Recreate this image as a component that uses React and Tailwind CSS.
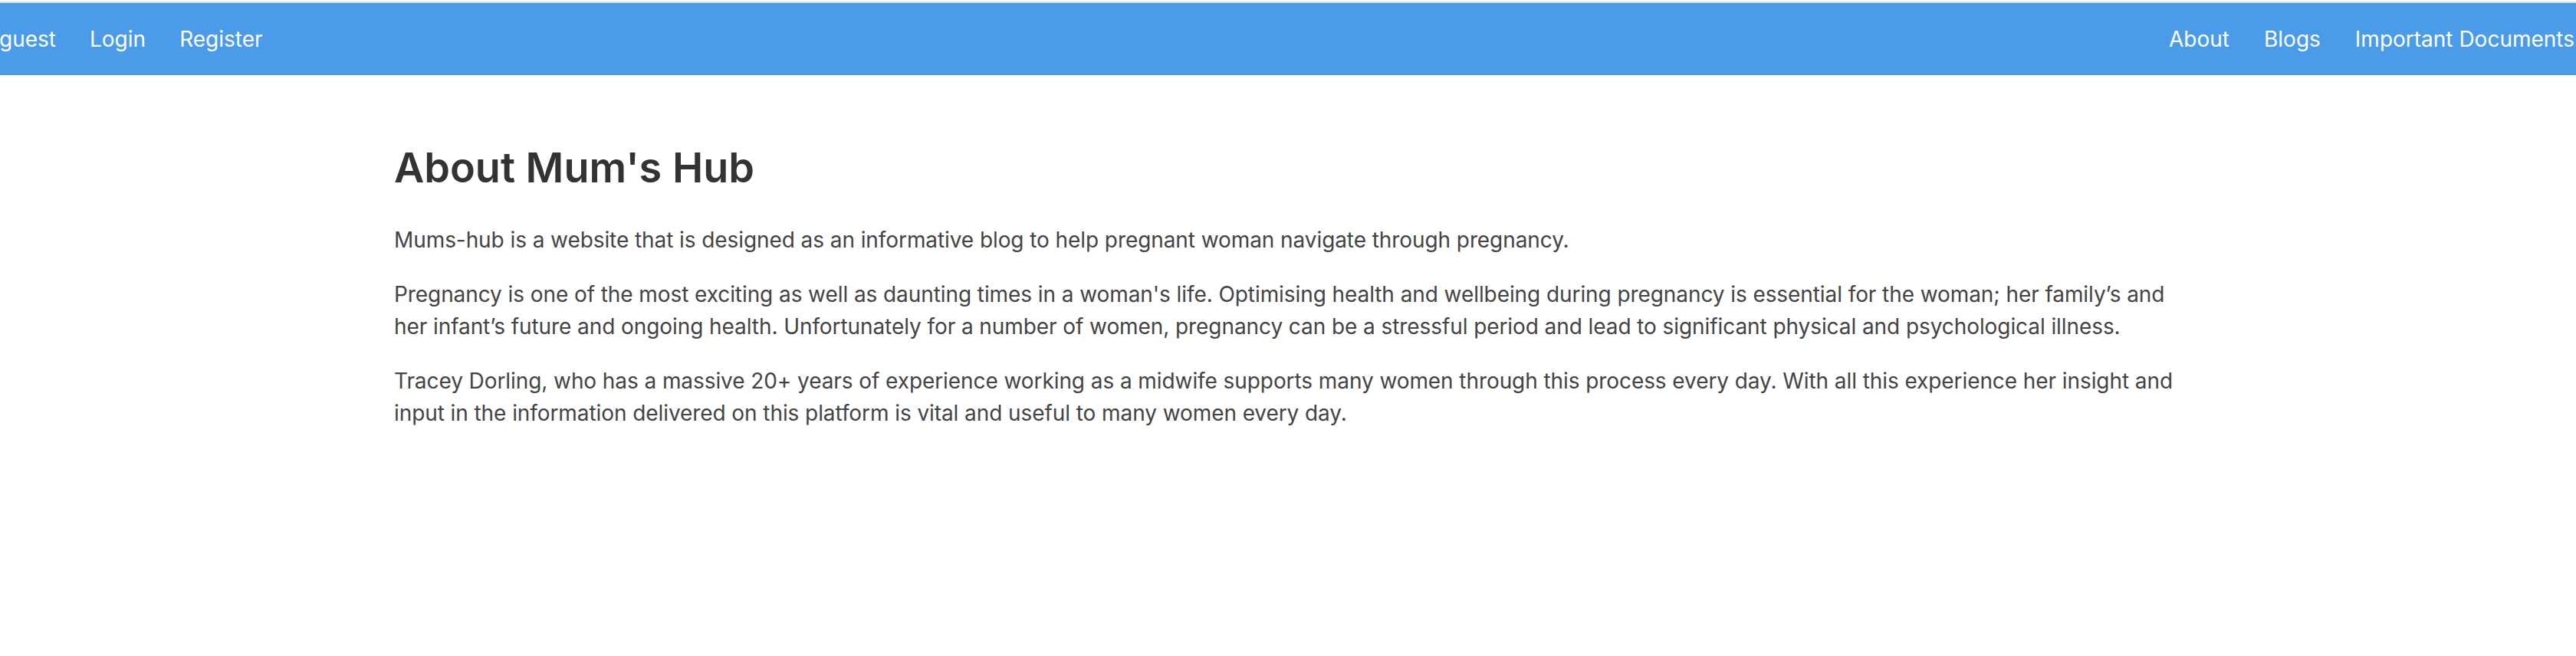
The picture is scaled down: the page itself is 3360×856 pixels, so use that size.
import React from "react";

export default function App() {
  const font = { fontFamily: "Inter, 'Noto Sans', sans-serif" };
  return (
    <div className="min-h-[856px] w-[3360px] overflow-hidden bg-white" style={font}>
      <div className="pt-[2px]">
        <nav className="flex h-[96px] items-center justify-between border-t-2 border-[#d9dbdd] bg-[#4a9ce8] text-[28px] text-white">
          <div className="-ml-[1px] flex items-center gap-[44px]">
            <a>guest</a>
            <a>Login</a>
            <a>Register</a>
          </div>
          <div className="mr-[2px] flex items-center gap-[45px]">
            <a>About</a>
            <a>Blogs</a>
            <a>Important Documents</a>
          </div>
        </nav>
      </div>
      <main className="mx-auto w-[2332px]">
        <h2 className="mt-[87px] mb-[40px] text-[54px] leading-[67px] font-semibold text-[#333333]">
          About Mum's Hub
        </h2>
        <div className="text-[28px] leading-[42px] tracking-[-0.08px] text-[#444444]">
          <p className="mb-[29px]">
            Mums-hub is a website that is designed as an informative blog to help pregnant woman navigate through pregnancy.
          </p>
          <p className="mb-[29px]">
            Pregnancy is one of the most exciting as well as daunting times in a woman's life. Optimising health and wellbeing during pregnancy is essential for the woman; her family’s and her infant’s future and ongoing health. Unfortunately for a number of women, pregnancy can be a stressful period and lead to significant physical and psychological illness.
          </p>
          <p className="mb-[29px]">
            Tracey Dorling, who has a massive 20+ years of experience working as a midwife supports many women through this process every day. With all this experience her insight and input in the information delivered on this platform is vital and useful to many women every day.
          </p>
        </div>
      </main>
    </div>
  );
}
